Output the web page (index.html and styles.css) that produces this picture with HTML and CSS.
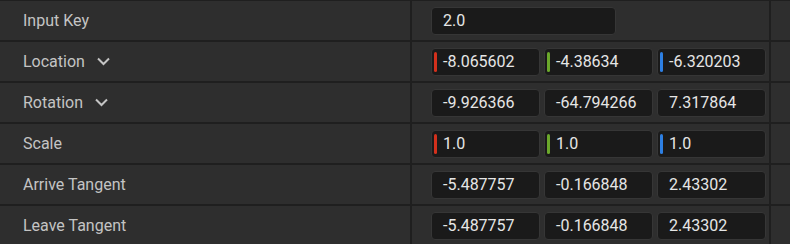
FILE: index.html
```html
<!DOCTYPE html>
<html>
<head>
<meta charset="utf-8">
<title>Spline Point Details</title>
<link rel="stylesheet" href="styles.css">
</head>
<body>
<div class="details">

  <div class="row">
    <div class="name">Input Key</div>
    <div class="value">
      <div class="field wide">2.0</div>
    </div>
    <div class="extra"></div>
  </div>

  <div class="row">
    <div class="name">Location
      <svg class="chevron" width="13" height="9" viewBox="0 0 13 9"><polyline points="1,1.5 6.5,7 12,1.5"/></svg>
    </div>
    <div class="value">
      <div class="field axis"><span class="bar x"></span>-8.065602</div>
      <div class="field axis"><span class="bar y"></span>-4.38634</div>
      <div class="field axis"><span class="bar z"></span>-6.320203</div>
    </div>
    <div class="extra"></div>
  </div>

  <div class="row">
    <div class="name">Rotation
      <svg class="chevron" width="13" height="9" viewBox="0 0 13 9"><polyline points="1,1.5 6.5,7 12,1.5"/></svg>
    </div>
    <div class="value">
      <div class="field">-9.926366</div>
      <div class="field">-64.794266</div>
      <div class="field">7.317864</div>
    </div>
    <div class="extra"></div>
  </div>

  <div class="row">
    <div class="name">Scale</div>
    <div class="value">
      <div class="field axis"><span class="bar x"></span>1.0</div>
      <div class="field axis"><span class="bar y"></span>1.0</div>
      <div class="field axis"><span class="bar z"></span>1.0</div>
    </div>
    <div class="extra"></div>
  </div>

  <div class="row">
    <div class="name">Arrive Tangent</div>
    <div class="value">
      <div class="field">-5.487757</div>
      <div class="field">-0.166848</div>
      <div class="field">2.43302</div>
    </div>
    <div class="extra"></div>
  </div>

  <div class="row">
    <div class="name">Leave Tangent</div>
    <div class="value">
      <div class="field">-5.487757</div>
      <div class="field">-0.166848</div>
      <div class="field">2.43302</div>
    </div>
    <div class="extra"></div>
  </div>

</div>
</body>
</html>
```

FILE: styles.css
```css
body {
  margin: 0;
  background-color: #1f1f1f;
  font: 16px Roboto, "Liberation Sans", sans-serif;
}

.details {
  display: flex;
  flex-direction: column;
  gap: 2px;
  padding-top: 1px;
}

.row {
  display: grid;
  grid-template-columns: 410px 357px 1fr;
  column-gap: 2px;
  height: 39px;
}

.name,
.value,
.extra {
  background-color: #2e2e2e;
}

.name {
  display: flex;
  align-items: center;
  padding-left: 23px;
  color: #c4c4c4;
}

.chevron {
  margin-left: 12px;
  fill: none;
  stroke: #c4c4c4;
  stroke-width: 2;
}

.value {
  display: flex;
  align-items: center;
  gap: 4px;
  padding-left: 19px;
}

.field {
  display: flex;
  align-items: center;
  box-sizing: border-box;
  width: 109px;
  height: 28px;
  padding-left: 11px;
  background-color: #1a1a1a;
  border: 1px solid #363636;
  border-radius: 4px;
  color: #e6e6e6;
  white-space: nowrap;
}

.field.wide {
  width: 185px;
}

.field.axis {
  padding-left: 2px;
}

.bar {
  width: 3px;
  height: 20px;
  margin-right: 6px;
  border-radius: 2px;
}

.bar.x { background-color: #d3301c; }
.bar.y { background-color: #6ba82b; }
.bar.z { background-color: #2d7fe3; }
```
